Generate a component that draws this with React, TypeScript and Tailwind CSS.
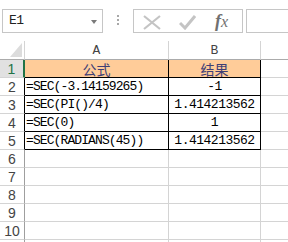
import React from "react";

const mono = { fontFamily: '"Liberation Mono", "Noto Sans CJK SC", monospace' };

type Row = { n: string; a: string; b: string; head?: boolean; table?: boolean };

const rows: Row[] = [
  { n: "1", a: "公式", b: "结果", head: true, table: true },
  { n: "2", a: "=SEC(-3.14159265)", b: "-1", table: true },
  { n: "3", a: "=SEC(PI()/4)", b: "1.414213562", table: true },
  { n: "4", a: "=SEC(0)", b: "1", table: true },
  { n: "5", a: "=SEC(RADIANS(45))", b: "1.414213562", table: true },
  { n: "6", a: "", b: "" },
  { n: "7", a: "", b: "" },
  { n: "8", a: "", b: "" },
  { n: "9", a: "", b: "" },
  { n: "10", a: "", b: "" },
  { n: "", a: "", b: "" },
];

export default function App() {
  return (
    <div className="w-[288px] h-[242px] overflow-hidden bg-white relative">
      {/* toolbar */}
      <div className="h-[41px] flex items-start pt-[9px]">
        <div className="ml-[2px] w-[101px] h-[24px] border border-[#c6c6c6] flex items-center pl-[6px] relative">
          <span className="text-[13px] text-[#222] tracking-[-0.5px]" style={mono}>E1</span>
          <div className="absolute left-[88px] top-[10px] w-0 h-0 border-l-[3.5px] border-r-[3.5px] border-t-[4px] border-l-transparent border-r-transparent border-t-[#7a7a7a]" />
        </div>
        <div className="ml-[14px] mt-[6px] flex flex-col gap-[2px]">
          <div className="w-[2px] h-[2px] bg-[#a8a8a8]" />
          <div className="w-[2px] h-[2px] bg-[#a8a8a8]" />
          <div className="w-[2px] h-[2px] bg-[#a8a8a8]" />
        </div>
        <div className="ml-[14px] w-[110px] h-[24px] border border-[#c6c6c6] relative">
          <svg className="absolute left-[9px] top-[5px]" width="18" height="15" viewBox="0 0 18 15">
            <path d="M1 1 L17 14 M17 1 L1 14" stroke="#c4c4c4" strokeWidth="2.2" fill="none" />
          </svg>
          <svg className="absolute left-[45px] top-[5px]" width="17" height="15" viewBox="0 0 17 15">
            <path d="M1 8 L6 13 L16 1" stroke="#c4c4c4" strokeWidth="3" fill="none" />
          </svg>
          <span
            className="absolute left-[81px] top-[0px] text-[18px] italic font-bold text-[#707070] leading-[22px]"
            style={{ fontFamily: '"Liberation Serif", serif' }}
          >
            f<span className="font-normal text-[16px]">x</span>
          </span>
        </div>
        <div className="ml-[3px] flex-1 h-[24px] border border-[#c6c6c6] border-r-0" />
      </div>

      {/* sheet */}
      <div className="grid grid-cols-[25px_144px_92px_1fr]">
        {/* header row */}
        <div className="h-[19px] border-r border-b border-r-[#d4d4d4] border-b-[#ababab] relative">
          <svg className="absolute left-[10px] top-[2px]" width="12" height="14" viewBox="0 0 12 14">
            <path d="M12 0 L12 14 L0 14 Z" fill="#dcdcdc" />
          </svg>
        </div>
        <div className="h-[19px] border-r border-b border-r-[#d4d4d4] border-b-[#ababab] flex items-end justify-center pb-[1px] text-[13px] text-[#444] leading-[15px]" style={mono}>
          A
        </div>
        <div className="h-[19px] border-r border-b border-r-[#d4d4d4] border-b-[#ababab] flex items-end justify-center pb-[1px] text-[13px] text-[#444] leading-[15px]" style={mono}>
          B
        </div>
        <div className="h-[19px] border-b border-b-[#ababab]" />

        {rows.map((r, i) => {
          const rowHeadCls = r.head
            ? "bg-[#e1e1e1] text-[#217346] border-r-2 border-r-[#217346]"
            : r.table
            ? "text-[#444] border-r border-r-black"
            : "text-[#444] border-r border-r-[#9f9f9f]";
          const cellBorder = r.table
            ? "border-r border-b border-r-black border-b-black"
            : "border-r border-b border-r-[#d4d4d4] border-b-[#d4d4d4]";
          const bg = r.head ? "bg-[#ffcc99]" : "";
          return (
            <React.Fragment key={i}>
              <div
                className={`h-[18px] border-b border-b-[#d4d4d4] flex items-center justify-center text-[14px] leading-none ${rowHeadCls}`}
                style={{ fontFamily: '"Liberation Sans", sans-serif' }}
              >
                {r.n}
              </div>
              <div
                className={`h-[18px] ${cellBorder} ${bg} flex items-center ${r.head ? "justify-center text-[#3f3f76] text-[14px]" : "pl-[1px] text-[13px] text-black tracking-[-0.9px]"} leading-none whitespace-nowrap`}
                style={r.head ? { fontFamily: '"Noto Sans CJK SC", sans-serif' } : mono}
              >
                {r.a}
              </div>
              <div
                className={`h-[18px] ${cellBorder} ${bg} flex items-center justify-center ${r.head ? "text-[#3f3f76] text-[14px]" : "text-[13px] text-black tracking-[-0.5px]"} leading-none whitespace-nowrap`}
                style={r.head ? { fontFamily: '"Noto Sans CJK SC", sans-serif' } : mono}
              >
                {r.b}
              </div>
              <div className="h-[18px] border-b border-b-[#d4d4d4]" />
            </React.Fragment>
          );
        })}
      </div>
    </div>
  );
}
